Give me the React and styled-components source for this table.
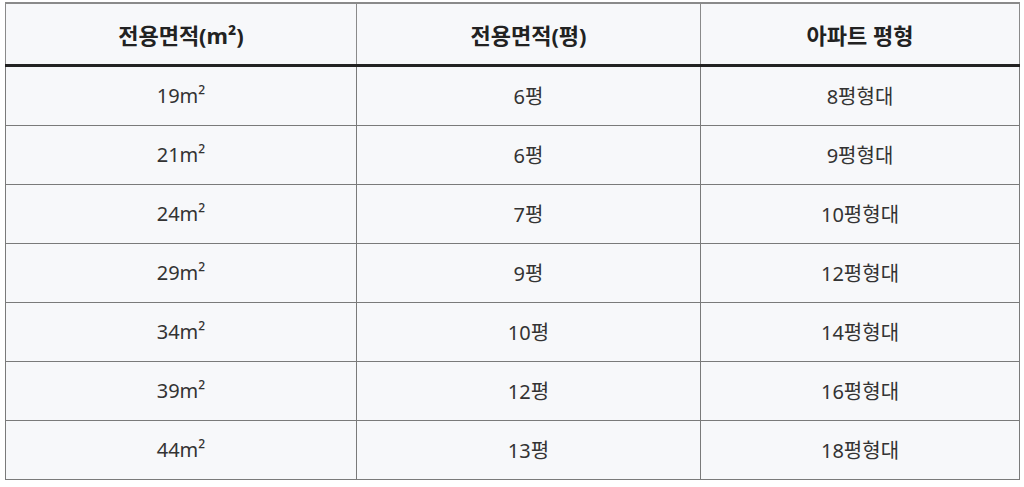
import React from 'react';
import styled, { createGlobalStyle } from 'styled-components';

const rows = [
  ['19m²', '6평', '8평형대'],
  ['21m²', '6평', '9평형대'],
  ['24m²', '7평', '10평형대'],
  ['29m²', '9평', '12평형대'],
  ['34m²', '10평', '14평형대'],
  ['39m²', '12평', '16평형대'],
  ['44m²', '13평', '18평형대'],
];

export default function App() {
  return (
    <>
      <GlobalStyle />
      <Wrapper>
        <Table>
          <colgroup>
            <col style={{ width: 351 }} />
            <col style={{ width: 344 }} />
            <col />
          </colgroup>
          <thead>
            <tr>
              <Th>전용면적(m²)</Th>
              <Th>전용면적(평)</Th>
              <Th>아파트 평형</Th>
            </tr>
          </thead>
          <tbody>
            {rows.map((r, i) => (
              <tr key={i}>
                {r.map((c, j) => (
                  <Td key={j}>{c}</Td>
                ))}
              </tr>
            ))}
          </tbody>
        </Table>
      </Wrapper>
    </>
  );
}

const GlobalStyle = createGlobalStyle`
  html, body {
    margin: 0;
    background: #ffffff;
  }
  body {
    font-family: 'Noto Sans', 'Noto Sans CJK KR', sans-serif;
  }
`;

const Wrapper = styled.div`
  padding: 2px 4px 0 5px;
`;

const Table = styled.table`
  width: 1015px;
  border-collapse: collapse;
  table-layout: fixed;
  background: #f7f8fa;
  border: 1px solid #8a8a8a;
  border-top: 2px solid #8a8a8a;
`;

const Th = styled.th`
  height: 60px;
  padding: 0;
  font-size: 22px;
  font-weight: 700;
  color: #222;
  text-align: center;
  vertical-align: middle;
  border-left: 1px solid #8a8a8a;
  border-right: 1px solid #8a8a8a;
  border-bottom: 3px solid #222;
`;

const Td = styled.td`
  height: 56px;
  padding: 0 0 2px;
  font-size: 20px;
  font-weight: 400;
  color: #333;
  text-align: center;
  vertical-align: middle;
  border: 1px solid #7a7a7a;
`;
